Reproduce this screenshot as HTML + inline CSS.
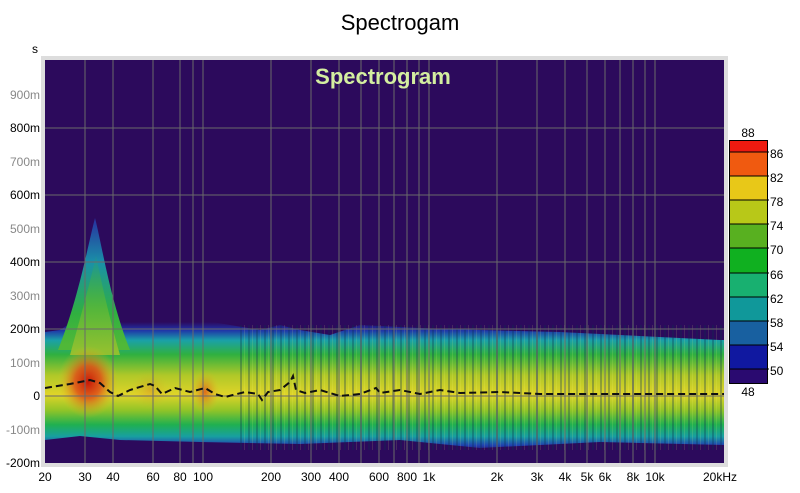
<!DOCTYPE html>
<html><head><meta charset="utf-8"><style>
html,body{margin:0;padding:0;background:#fff;}
body{width:800px;height:488px;overflow:hidden;font-family:"Liberation Sans",sans-serif;}
</style></head><body>
<svg width="800" height="488" xmlns="http://www.w3.org/2000/svg" font-family="Liberation Sans, sans-serif">
<defs>
<linearGradient id="band" gradientUnits="userSpaceOnUse" x1="0" y1="322" x2="0" y2="452">
<stop offset="0" stop-color="#2c0a5c"/>
<stop offset="0.06" stop-color="#2030a8"/>
<stop offset="0.14" stop-color="#1aa0a8"/>
<stop offset="0.25" stop-color="#30b040"/>
<stop offset="0.41" stop-color="#b0c828"/>
<stop offset="0.56" stop-color="#e0d428"/>
<stop offset="0.68" stop-color="#90c428"/>
<stop offset="0.79" stop-color="#20b050"/>
<stop offset="0.88" stop-color="#18a0a0"/>
<stop offset="0.95" stop-color="#2040b0"/>
<stop offset="1" stop-color="#2c0a5c"/>
</linearGradient>
<linearGradient id="plume" gradientUnits="userSpaceOnUse" x1="0" y1="218" x2="0" y2="345">
<stop offset="0" stop-color="#2830a0"/>
<stop offset="0.35" stop-color="#1a90a8"/>
<stop offset="0.75" stop-color="#30b040"/>
<stop offset="1" stop-color="#50b838"/>
</linearGradient>
<linearGradient id="plume2" gradientUnits="userSpaceOnUse" x1="0" y1="250" x2="0" y2="350">
<stop offset="0" stop-color="#30b040" stop-opacity="0"/>
<stop offset="0.6" stop-color="#60b838" stop-opacity="0.8"/>
<stop offset="1" stop-color="#90c030"/>
</linearGradient>
<radialGradient id="red">
<stop offset="0" stop-color="#c81808"/>
<stop offset="0.45" stop-color="#e05018" stop-opacity="0.85"/>
<stop offset="1" stop-color="#e0c020" stop-opacity="0"/>
</radialGradient>
<radialGradient id="org">
<stop offset="0" stop-color="#e04818"/>
<stop offset="1" stop-color="#e0c020" stop-opacity="0"/>
</radialGradient>
<pattern id="stripes" width="8" height="10" patternUnits="userSpaceOnUse">
<rect x="0" y="0" width="2" height="10" fill="#0a3050" opacity="0.3"/>
<rect x="4" y="0" width="1" height="10" fill="#ffff80" opacity="0.12"/>
</pattern>
<clipPath id="plot"><rect x="45" y="60" width="679" height="403"/></clipPath>
</defs>
<rect x="41" y="56" width="687" height="411" fill="#ddd"/>
<rect x="45" y="60" width="679" height="403" fill="#2c0a5c"/>
<g clip-path="url(#plot)">
<path d="M45,332 L60,330 L75,320 L110,300 L125,322 L130,312 L138,322 L150,318 L155,310 L162,322 L180,318 L195,322 L205,305 L212,322 L230,325 L260,330 L280,325 L300,330 L330,335 L360,325 L420,328 L480,330 L560,332 L640,336 L720,340 L724,340 L724,445 L600,442 L480,448 L400,440 L300,444 L200,442 L120,440 L80,436 L45,440 Z" fill="url(#band)"/>
<path d="M58,350 C78,300 88,245 95,218 C102,245 110,300 130,350 Z" fill="url(#plume)"/>
<path d="M70,355 C84,305 92,275 96,255 C100,275 106,305 120,355 Z" fill="url(#plume2)"/>
<rect x="240" y="325" width="484" height="125" fill="url(#stripes)"/>
<ellipse cx="88" cy="382" rx="30" ry="36" fill="url(#red)"/>
<ellipse cx="205" cy="392" rx="15" ry="22" fill="url(#org)" opacity="0.75"/>
<ellipse cx="150" cy="390" rx="20" ry="20" fill="url(#org)" opacity="0.25"/>
<g stroke="#6a6a6a" stroke-width="1">
<line x1="85" y1="60" x2="85" y2="463"/><line x1="113" y1="60" x2="113" y2="463"/>
<line x1="153" y1="60" x2="153" y2="463"/><line x1="180" y1="60" x2="180" y2="463"/>
<line x1="193" y1="60" x2="193" y2="463"/><line x1="203" y1="60" x2="203" y2="463"/>
<line x1="271" y1="60" x2="271" y2="463"/><line x1="311" y1="60" x2="311" y2="463"/>
<line x1="339" y1="60" x2="339" y2="463"/><line x1="361" y1="60" x2="361" y2="463"/>
<line x1="379" y1="60" x2="379" y2="463"/><line x1="394" y1="60" x2="394" y2="463"/>
<line x1="407" y1="60" x2="407" y2="463"/><line x1="419" y1="60" x2="419" y2="463"/>
<line x1="429" y1="60" x2="429" y2="463"/><line x1="497" y1="60" x2="497" y2="463"/>
<line x1="537" y1="60" x2="537" y2="463"/><line x1="565" y1="60" x2="565" y2="463"/>
<line x1="587" y1="60" x2="587" y2="463"/><line x1="605" y1="60" x2="605" y2="463"/>
<line x1="620" y1="60" x2="620" y2="463"/><line x1="633" y1="60" x2="633" y2="463"/>
<line x1="645" y1="60" x2="645" y2="463"/><line x1="655" y1="60" x2="655" y2="463"/>
<line x1="45" y1="128" x2="724" y2="128"/><line x1="45" y1="195" x2="724" y2="195"/>
<line x1="45" y1="262" x2="724" y2="262"/><line x1="45" y1="329" x2="724" y2="329"/>
<line x1="45" y1="396" x2="724" y2="396"/>
</g>
<path d="M45,388 L70,384 L90,380 L100,383 L110,392 L118,396 L130,390 L150,384 L155,386 L162,394 L175,388 L190,392 L205,388 L215,394 L225,397 L245,392 L258,394 L262,400 L268,392 L280,390 L290,382 L293,376 L296,390 L305,393 L320,390 L340,396 L360,394 L376,388 L380,393 L400,390 L420,394 L440,390 L460,393 L500,392 L540,394 L600,394 L660,394 L724,394" fill="none" stroke="#111" stroke-width="2" stroke-dasharray="7,4"/>
</g>
<text x="383" y="84" font-size="22" font-weight="bold" fill="#d4eea0" text-anchor="middle">Spectrogram</text>
<text x="400" y="30" font-size="22" fill="#000" text-anchor="middle">Spectrogam</text>
<g font-size="12" text-anchor="end">
<text x="38" y="53" fill="#000">s</text>
<text x="40" y="99" fill="#888">900m</text>
<text x="40" y="132" fill="#000">800m</text>
<text x="40" y="166" fill="#888">700m</text>
<text x="40" y="199" fill="#000">600m</text>
<text x="40" y="233" fill="#888">500m</text>
<text x="40" y="266" fill="#000">400m</text>
<text x="40" y="300" fill="#888">300m</text>
<text x="40" y="333" fill="#000">200m</text>
<text x="40" y="367" fill="#888">100m</text>
<text x="40" y="400" fill="#000">0</text>
<text x="40" y="434" fill="#888">-100m</text>
<text x="40" y="467" fill="#000">-200m</text>
</g>
<g font-size="12" fill="#000" text-anchor="middle">
<text x="45" y="481">20</text><text x="85" y="481">30</text><text x="113" y="481">40</text>
<text x="153" y="481">60</text><text x="180" y="481">80</text><text x="203" y="481">100</text>
<text x="271" y="481">200</text><text x="311" y="481">300</text><text x="339" y="481">400</text>
<text x="379" y="481">600</text><text x="407" y="481">800</text><text x="429" y="481">1k</text>
<text x="497" y="481">2k</text><text x="537" y="481">3k</text><text x="565" y="481">4k</text>
<text x="587" y="481">5k</text><text x="605" y="481">6k</text><text x="633" y="481">8k</text>
<text x="655" y="481">10k</text><text x="720" y="481">20kHz</text>
</g>
<g>
<rect x="729" y="140" width="38" height="12" fill="#ee1a10"/>
<rect x="729" y="152" width="38" height="24" fill="#f05a10"/>
<rect x="729" y="176" width="38" height="24" fill="#e8c818"/>
<rect x="729" y="200" width="38" height="24" fill="#b8c818"/>
<rect x="729" y="224" width="38" height="24" fill="#58b020"/>
<rect x="729" y="248" width="38" height="25" fill="#10b020"/>
<rect x="729" y="273" width="38" height="24" fill="#18b070"/>
<rect x="729" y="297" width="38" height="24" fill="#10989a"/>
<rect x="729" y="321" width="38" height="24" fill="#1860a0"/>
<rect x="729" y="345" width="38" height="24" fill="#1018a0"/>
<rect x="729" y="369" width="38" height="14" fill="#2a0a70"/>
<g stroke="#000" stroke-width="1">
<line x1="729" y1="152" x2="769" y2="152"/><line x1="729" y1="176" x2="769" y2="176"/>
<line x1="729" y1="200" x2="769" y2="200"/><line x1="729" y1="224" x2="769" y2="224"/>
<line x1="729" y1="248" x2="769" y2="248"/><line x1="729" y1="273" x2="769" y2="273"/>
<line x1="729" y1="297" x2="769" y2="297"/><line x1="729" y1="321" x2="769" y2="321"/>
<line x1="729" y1="345" x2="769" y2="345"/><line x1="729" y1="369" x2="769" y2="369"/>
</g>
<rect x="729.5" y="140.5" width="38" height="243" fill="none" stroke="#000"/>
<g font-size="12" fill="#000">
<text x="748" y="137" text-anchor="middle">88</text>
<text x="748" y="396" text-anchor="middle">48</text>
<text x="770" y="158">86</text><text x="770" y="182">82</text><text x="770" y="206">78</text>
<text x="770" y="230">74</text><text x="770" y="254">70</text><text x="770" y="279">66</text>
<text x="770" y="303">62</text><text x="770" y="327">58</text><text x="770" y="351">54</text>
<text x="770" y="375">50</text>
</g>
</g>
</svg>
</body></html>
